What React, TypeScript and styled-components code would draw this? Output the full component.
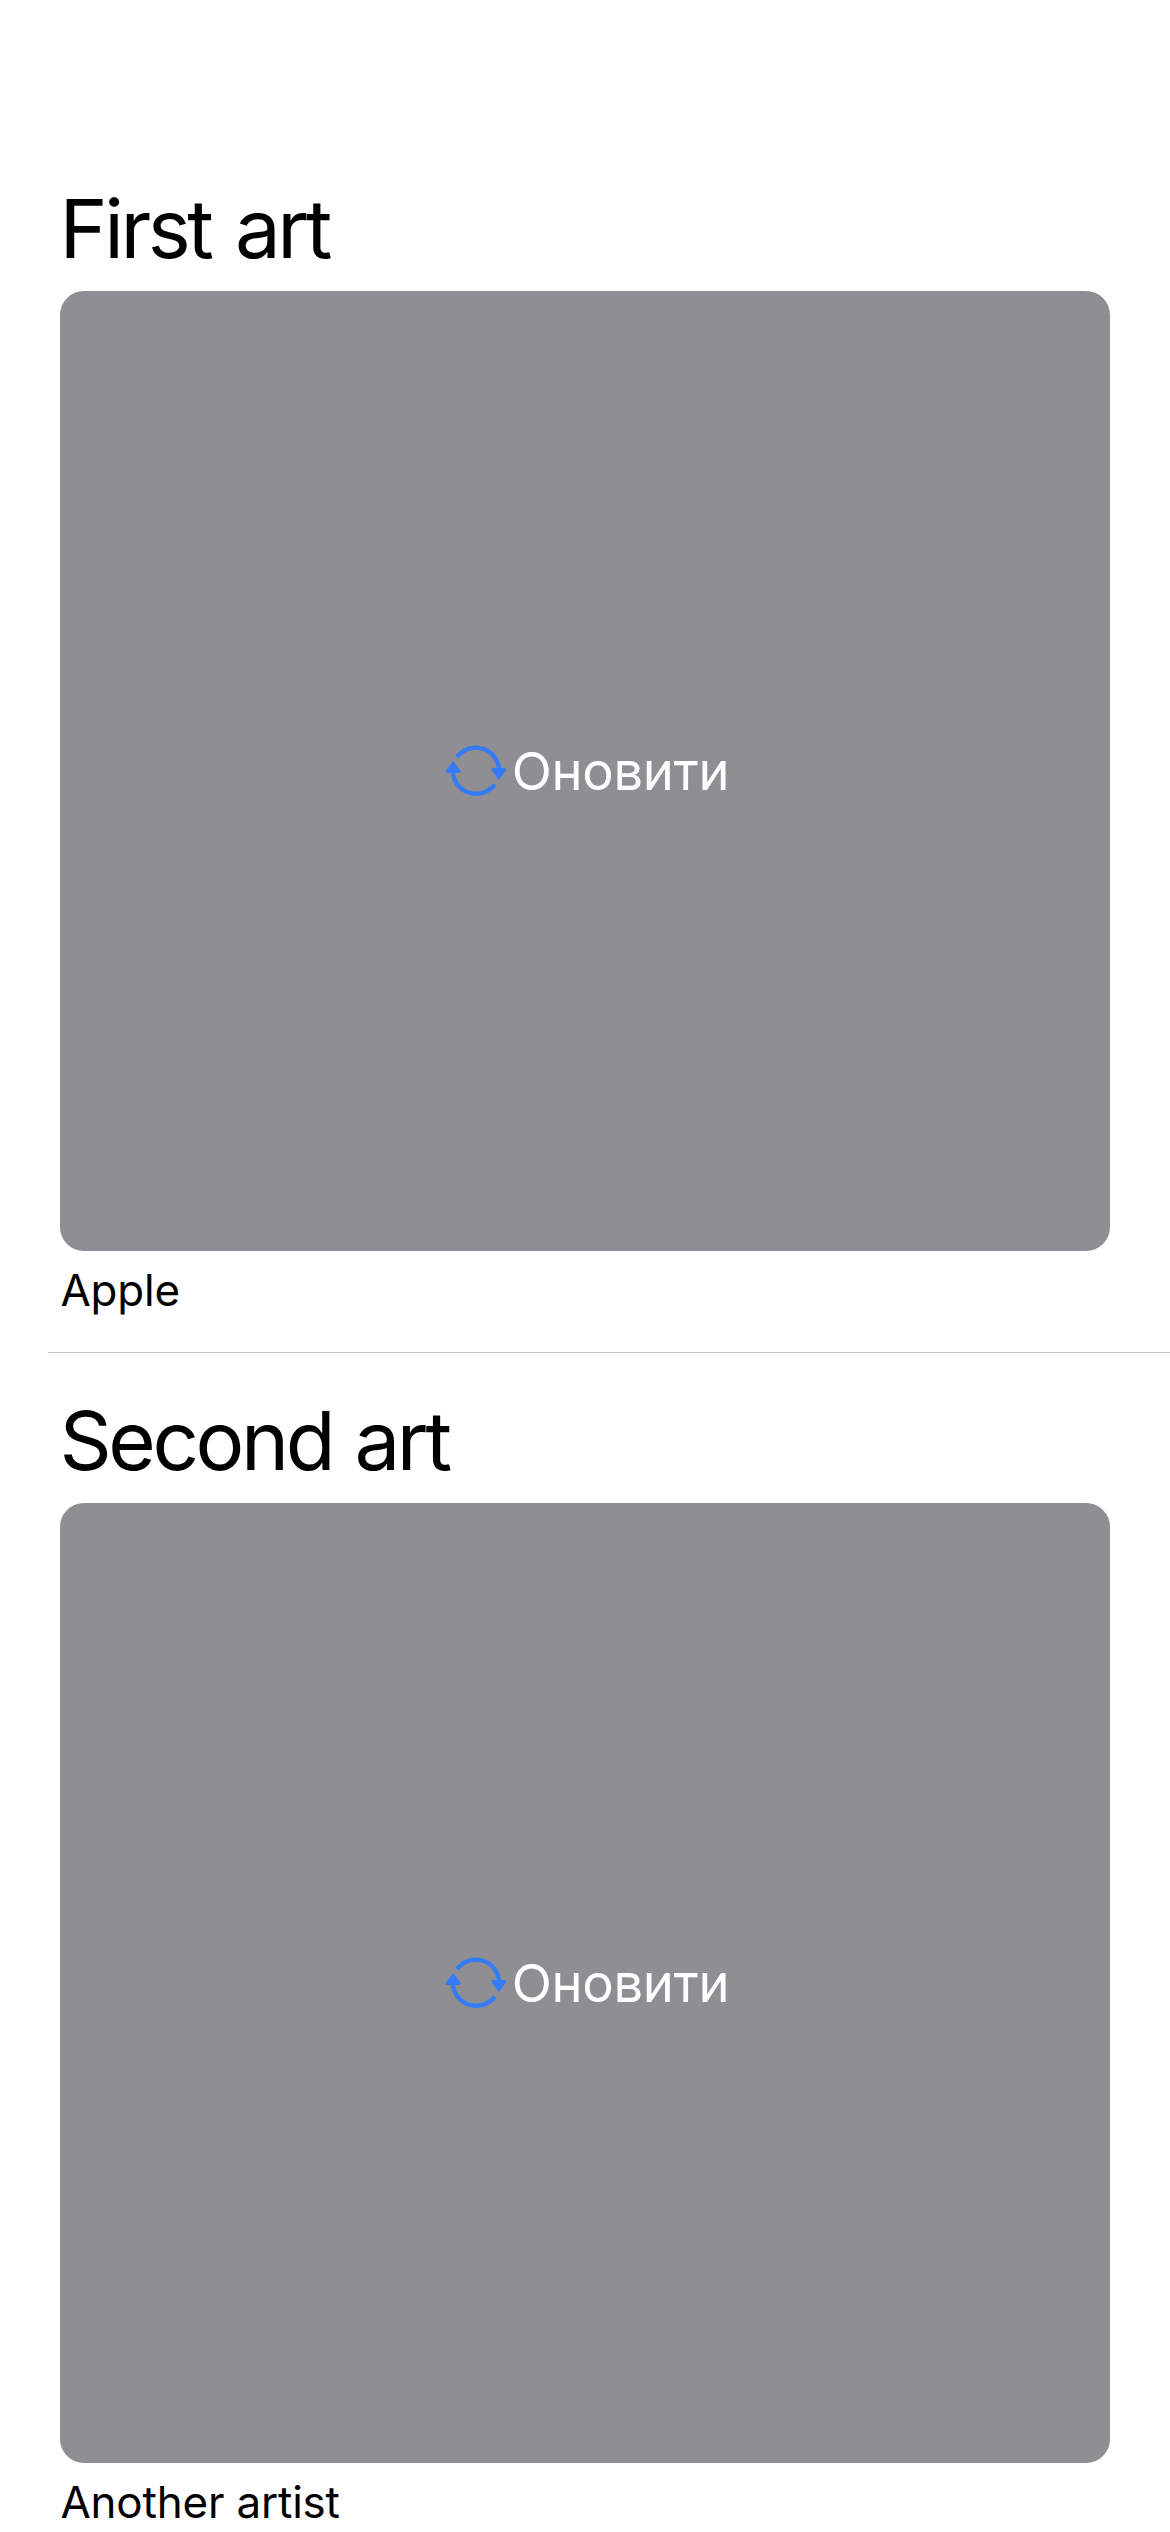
import React from "react";
import styled, { createGlobalStyle } from "styled-components";

const GlobalStyle = createGlobalStyle`
  body {
    margin: 0;
    background: #fff;
    font-family: Inter, "Liberation Sans", sans-serif;
  }
`;

const Screen = styled.main`
  box-sizing: border-box;
  height: 2532px;
  padding-top: 141px;
  overflow: hidden;
  background: #fff;
`;

const Row = styled.article`
  box-sizing: border-box;
  height: 1212px;
  padding: 36px 60px 0;
  display: flex;
  flex-direction: column;
`;

const Title = styled.h2<{ $wordGap: number }>`
  margin: 0 0 0 -0.5px;
  height: 114px;
  line-height: 104px;
  font-size: 81.5px;
  font-weight: 400;
  letter-spacing: -3.45px;
  word-spacing: ${(p) => p.$wordGap}px;
  white-space: nowrap;
  color: #000;
`;

const Artwork = styled.div`
  height: 960px;
  flex: none;
  border-radius: 24px;
  background: #8e8e93;
  display: flex;
  align-items: center;
  justify-content: center;
`;

const RefreshButton = styled.button`
  border: 0;
  padding: 0 0 0 3px;
  background: none;
  display: flex;
  align-items: center;
  gap: 1px;
  font: inherit;
  font-size: 52.5px;
  line-height: 64px;
  letter-spacing: -0.3px;
  color: #fff;
`;

const RefreshGlyph = styled.svg`
  width: 67px;
  height: 62px;
  flex: none;
  color: #347cf7;
`;

const Artist = styled.p`
  margin: 0;
  padding: 12px 0 0 0.5px;
  font-size: 43.9px;
  line-height: 54px;
  letter-spacing: -0.17px;
  white-space: nowrap;
  color: #000;
`;

const Divider = styled.hr`
  width: 1122px;
  height: 1px;
  flex: none;
  margin: auto -60px 0 -12px;
  border: 0;
  background: #c6c6c8;
`;

function RefreshIcon() {
  return (
    <RefreshGlyph viewBox="0 0 67 62" fill="none" stroke="currentColor" strokeLinecap="round" strokeLinejoin="round">
      <path d="M14.2 15.6A23.4 23.4 0 0 1 55.2 30.5" strokeWidth="4.3" />
      <path d="M49.6 46A23.4 23.4 0 0 1 8.8 30.5" strokeWidth="4.3" />
      <path d="M48.7 29.5H60.9L54.9 38Z" fill="currentColor" strokeWidth="2.8" />
      <path d="M3.1 31.5H15.3L9.1 23Z" fill="currentColor" strokeWidth="2.8" />
    </RefreshGlyph>
  );
}

const artworks = [
  { title: "First art", wordGap: 5, artist: "Apple" },
  { title: "Second art", wordGap: 3, artist: "Another artist" },
];

export default function App() {
  return (
    <>
      <GlobalStyle />
      <Screen>
        {artworks.map((item) => (
          <Row key={item.title}>
            <Title $wordGap={item.wordGap}>{item.title}</Title>
            <Artwork>
              <RefreshButton>
                <RefreshIcon />
                Оновити
              </RefreshButton>
            </Artwork>
            <Artist>{item.artist}</Artist>
            <Divider />
          </Row>
        ))}
      </Screen>
    </>
  );
}
